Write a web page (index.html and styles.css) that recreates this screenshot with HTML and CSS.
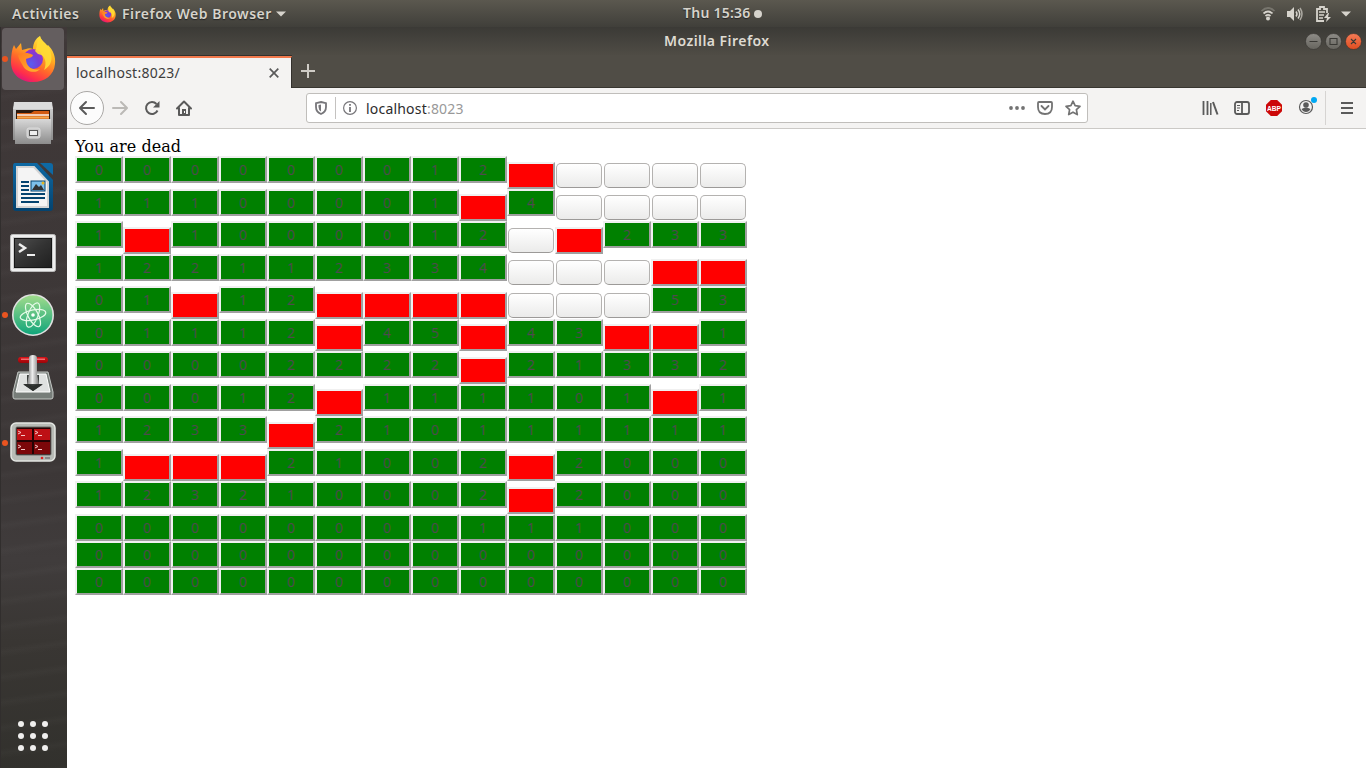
FILE: index.html
```html
<!DOCTYPE html>
<html lang="en">
<head>
<meta charset="utf-8">
<title>Mozilla Firefox</title>
<link rel="stylesheet" href="styles.css">
</head>
<body>
<svg class="defs" width="0" height="0" aria-hidden="true">
  <defs>
    <linearGradient id="fxBody" x1=".8" y1="0" x2=".3" y2="1"><stop offset="0" stop-color="#fff14a"/><stop offset=".35" stop-color="#ffb320"/><stop offset=".62" stop-color="#ff6a2a"/><stop offset=".85" stop-color="#ff2f4a"/><stop offset="1" stop-color="#e0147c"/></linearGradient>
    <radialGradient id="fxGlobe" cx=".4" cy=".75" r=".8"><stop offset="0" stop-color="#5a5df0"/><stop offset=".5" stop-color="#7440d8"/><stop offset="1" stop-color="#a030c8"/></radialGradient>
    <linearGradient id="fxFox" x1="0" y1="0" x2="1" y2="1"><stop offset="0" stop-color="#ff7a22"/><stop offset="1" stop-color="#ffb52c"/></linearGradient>
    <linearGradient id="metal" x1="0" y1="0" x2="0" y2="1"><stop offset="0" stop-color="#d8d8d8"/><stop offset="1" stop-color="#8c8c8c"/></linearGradient>
    <linearGradient id="atom" x1="0" y1="0" x2="0" y2="1"><stop offset="0" stop-color="#a2dc8c"/><stop offset="1" stop-color="#0ea47a"/></linearGradient>
    <linearGradient id="doc" x1="0" y1="0" x2="0" y2="1"><stop offset="0" stop-color="#0e69a4"/><stop offset="1" stop-color="#04436f"/></linearGradient>
    <linearGradient id="scr" x1="0" y1="0" x2="1" y2="1"><stop offset="0" stop-color="#505050"/><stop offset=".5" stop-color="#333"/><stop offset="1" stop-color="#1e1e1e"/></linearGradient>
    <linearGradient id="redTop" x1="0" y1="0" x2="0" y2="1"><stop offset="0" stop-color="#d81418"/><stop offset="1" stop-color="#9c0408"/></linearGradient>
    <linearGradient id="arm" x1="0" y1="0" x2="1" y2="0"><stop offset="0" stop-color="#777"/><stop offset=".45" stop-color="#eee"/><stop offset="1" stop-color="#777"/></linearGradient>
    <linearGradient id="knob" x1="0" y1="0" x2="0" y2="1"><stop offset="0" stop-color="#8e8c87"/><stop offset="1" stop-color="#66645e"/></linearGradient>
    <linearGradient id="knobClose" x1="0" y1="0" x2="0" y2="1"><stop offset="0" stop-color="#f47b56"/><stop offset="1" stop-color="#e04d20"/></linearGradient>
    <symbol id="firefox" viewBox="0 0 46 48">
      <path fill="url(#fxBody)" d="M4 10 6 14l5-6 1 7 4-1c2-1 5-1 7 0 0-6 3-11 7-13 1 5 5 6 7 10l1-1c5 5 8 12 7 19-1 11-10 18-22 18C10 47 1 39 1 27 1 20 2 14 4 10z"/>
      <circle cx="23" cy="24" r="10" fill="url(#fxGlobe)"/>
      <path fill="url(#fxFox)" d="M8 20c4-2 9-3 15 0 0 2-4 3-7 4 0 8 7 12 14 10-4 5-14 3-17-3-2-4-4-6-5-11z"/>
      <path fill="#ffdc35" d="M25 16c3-5 1-9 5-15 1 6 10 8 11 18 2 8-2 13-7 16 3-6 2-15-6-16z" opacity=".9"/>
    </symbol>
  </defs>
</svg>

<header class="topbar">
  <div class="topbar-left">
    <span class="activities">Activities</span>
    <svg class="mini-fox" width="17" height="18"><use href="#firefox"/></svg>
    <span class="appname">Firefox Web Browser</span>
    <svg width="10" height="6" viewBox="0 0 10 6"><path fill="#d6d3cc" d="M0 .5h10L5 5.5z"/></svg>
  </div>
  <div class="clock"><span class="clock-text">Thu 15:36</span><i class="dot"></i></div>
  <div class="tray">
    <svg width="14" height="14" viewBox="0 0 14 14" fill="none" stroke="#d6d3cc" stroke-width="1.7"><path d="M.5 4Q7-2 13.500 4" stroke="#77756d"/><path d="M2.500 6.500Q7 2.500 11.500 6.500M4.500 9Q7 6.800 9.500 9"/><circle cx="7" cy="11.500" r="2" fill="#d6d3cc" stroke="none"/></svg>
    <svg width="16" height="14" viewBox="0 0 16 14" fill="none" stroke="#d6d3cc" stroke-width="1.500"><path d="M0 4h3l4-4v14l-4-4H0z" fill="#d6d3cc" stroke="none"/><path d="M9 4.500q2 2.500 0 5M11 2.500q3.500 4.500 0 9"/><path d="M13 1q4 6 0 12" stroke="#aaa79f"/></svg>
    <svg class="battery" width="15" height="16" viewBox="0 0 15 16" fill="none" stroke="#d6d3cc" stroke-width="1.800"><path d="M8 15H1V3h3V1h4v2h3v4"/><path d="M3 6h6M3 9h5M3 12h4" stroke-width="1.500"/><path d="M12 7 8 12h3l-1 4 5-5h-3l1-4z" fill="#d6d3cc" stroke="none"/></svg>
    <svg width="10" height="6" viewBox="0 0 10 6"><path fill="#d6d3cc" d="M0 .5h10L5 5.500z"/></svg>
  </div>
</header>

<div class="desktop">
  <aside class="dock">
    <div class="slot active running"><svg width="46" height="48"><use href="#firefox"/></svg></div>
    <div class="slot">
      <svg width="42" height="44" viewBox="0 0 42 44"><path d="M2 1h38l1 8v30H1V9z" fill="url(#metal)"/><path d="M1 8 3 1h36l2 7z" fill="#dcdcdc"/><path d="M4 9h34v9H4z" fill="#2c1a10"/><path d="M5 12h14l3-2h15v8H5z" fill="#d35a12"/><path d="M5 14h32" stroke="#fff" stroke-width="1.400"/><path d="M5 16.500h32" stroke="#f5a84e" stroke-width="2"/><path d="M3 18h36v25H3z" fill="url(#metal)"/><rect x="15" y="27" width="13" height="10" rx="2" fill="#c8c8c8" stroke="#ddd"/><rect x="17.500" y="29.500" width="8" height="5" fill="#eee" stroke="#555"/></svg>
    </div>
    <div class="slot">
      <svg width="42" height="48" viewBox="0 0 42 48"><path d="M3 0h22l16 17v28q0 3-3 3H4q-3 0-3-3V3q0-3 2-3z" fill="url(#doc)"/><path d="M28 0h10q3 0 3 3v9z" fill="#0e69a4"/><path d="M5 4h17l14 15v25H5z" fill="#f4f4f4" stroke="#d4d4d4" stroke-width="2"/><path d="M9 19h8M9 23h8M9 27h8M9 31h24M9 35h24M9 39h18" stroke="#04436f" stroke-width="2"/><rect x="19" y="18" width="14" height="10" fill="#7dc0ea" stroke="#04436f"/><path d="m20 27 4-6 3 3 2-2 3 5z" fill="#333"/><circle cx="31" cy="20" r="1.500" fill="#e8b620"/></svg>
    </div>
    <div class="slot terminal">
      <svg width="46" height="38" viewBox="0 0 46 38"><rect x=".5" y=".5" width="45" height="37" rx="2" fill="#eee" stroke="#bbb"/><rect x="3.500" y="3.500" width="39" height="31" fill="url(#scr)" stroke="#ccc"/><rect x="4.500" y="4.500" width="37" height="29" fill="none" stroke="#161616"/><path d="m9 10 6 4-6 4" fill="none" stroke="#eee" stroke-width="2.500"/><path d="M17 21h8" stroke="#eee" stroke-width="2"/></svg>
    </div>
    <div class="slot running">
      <svg width="42" height="42" viewBox="0 0 42 42"><circle cx="21" cy="21" r="20.200" fill="url(#atom)" stroke="#e0e0e0" stroke-width="1.600"/><g fill="none" stroke="#e6fbe9" stroke-width="1.200"><ellipse cx="21" cy="21" rx="5" ry="13" transform="rotate(-28 21 21)"/><ellipse cx="21" cy="21" rx="5" ry="13" transform="rotate(22 21 21)"/><ellipse cx="21" cy="21" rx="5" ry="13" transform="rotate(78 21 21)"/></g><circle cx="21" cy="21" r="1.800" fill="#fff"/></svg>
    </div>
    <div class="slot press">
      <svg width="42" height="45" viewBox="0 0 42 45"><path d="M6 17h30l5 20v5q0 2-2 2H3q-2 0-2-2v-5z" fill="#777d79" stroke="#c4c8c5"/><path d="M8 19h26l4 18H4z" fill="#dfe1e0" stroke="#fff"/><rect x="6" y="2" width="30" height="6" rx="3" fill="url(#redTop)"/><rect x="9" y="3.500" width="24" height="1.500" fill="#f36b6e"/><path d="M15 20h12v10h3l-9 6-9-6h3z" fill="#3b3f3d"/><path d="M17 3q0-3 4-3t4 3v16l2 10H15l2-10z" fill="url(#arm)"/><path d="M11 29h5l5 2 5-2h5l-10 7z" fill="#2c2f2d"/></svg>
    </div>
    <div class="slot running">
      <svg width="46" height="41" viewBox="0 0 46 41"><rect x="1" y="1" width="44" height="38" rx="5" fill="#b8bbb6" stroke="#e4e6e2" stroke-width="1.500"/><rect x="6" y="5" width="35" height="28" rx="1" fill="#240304" stroke="#6a6c68"/><path d="M7 7h15v11H7zM24 7h16v11H24z" fill="#bd1015"/><path d="M7 20h15v12H7zM24 20h16v12H24z" fill="#7b0709"/><g fill="none" stroke="#f6c6c6" stroke-width="1"><path d="m8 9 3 1.500L8 12M11 13.500h4M25 9l3 1.500-3 1.500M28 13.500h4M8 23l3 1.500L8 26M11 27.500h4M25 23l3 1.500-3 1.500M28 27.500h4"/></g><circle cx="32" cy="36" r="1.300" fill="#e02020"/><path d="M35 36h5" stroke="#888" stroke-width="2"/></svg>
    </div>
    <div class="apps"><i></i><i></i><i></i><i></i><i></i><i></i><i></i><i></i><i></i></div>
  </aside>

  <main class="window">
    <div class="titlebar">
      <span class="title">Mozilla Firefox</span>
      <svg class="controls" width="57" height="17" viewBox="0 0 57 17"><g stroke="#32312d" stroke-width=".6"><circle cx="8.500" cy="8.500" r="8" fill="url(#knob)"/><circle cx="28.500" cy="8.500" r="8" fill="url(#knob)"/><circle cx="48.500" cy="8.500" r="8" fill="url(#knobClose)"/></g><path d="M4.500 8.500h8M25 5.500h7v6h-7zM46 6l5 5m0-5-5 5" fill="none" stroke="#3a3935" stroke-width="1.100"/></svg>
    </div>
    <div class="tabs">
      <div class="tab"><span class="tab-title">localhost:8023/</span><svg width="10" height="10" viewBox="0 0 10 10"><path d="m.7.7 8.600 8.600m0-8.600L.7 9.300" stroke="#5a5a5a" stroke-width="1.700"/></svg></div>
      <svg class="plus" width="14" height="14" viewBox="0 0 14 14"><path d="M7 0v14M0 7h14" stroke="#cfccc6" stroke-width="2"/></svg>
    </div>
    <nav class="toolbar">
      <div class="back"><svg width="16" height="14" viewBox="0 0 16 14" fill="none" stroke="#5a5a5a" stroke-width="2" stroke-linecap="round" stroke-linejoin="round"><path d="M15 7H1.500M7 1 1 7l6 6"/></svg></div>
      <svg class="fwd" width="16" height="14" viewBox="0 0 16 14" fill="none" stroke="#bbb9b6" stroke-width="2" stroke-linecap="round" stroke-linejoin="round"><path d="M1 7h13.500M9 1l6 6-6 6"/></svg>
      <svg class="reload" width="16" height="16" viewBox="0 0 16 16"><path d="M13.500 10.500A6 6 0 1 1 12.500 4" fill="none" stroke="#5a5a5a" stroke-width="2"/><path d="M15.500 1v6.500H9z" fill="#5a5a5a"/></svg>
      <svg class="home" width="16" height="16" viewBox="0 0 16 16"><path d="M1 8.500 8 1.500l7 7M3 8v7h10V8" fill="none" stroke="#5a5a5a" stroke-width="2" stroke-linecap="round" stroke-linejoin="round"/><path d="M6 9h4v6H6z" fill="#5a5a5a"/><path d="M8 11h1v2H8z" fill="#fff"/></svg>
      <div class="urlbar">
        <svg width="12" height="14" viewBox="0 0 12 14"><path d="M6 1 11 2.200V6q0 5-5 7-5-2-5-7V2.200z" fill="none" stroke="#77767a" stroke-width="1.800"/><path d="M6 3.500v7Q3.500 9 3.500 6V4z" fill="#77767a"/></svg>
        <i class="sep"></i>
        <svg width="14" height="14" viewBox="0 0 14 14"><circle cx="7" cy="7" r="6.400" fill="none" stroke="#77767a" stroke-width="1.200"/><path d="M7 6v5M7 3v1.800" stroke="#77767a" stroke-width="1.800"/></svg>
        <span class="address">localhost<span>:8023</span></span>
        <svg class="more" width="16" height="4" viewBox="0 0 16 4" fill="#737373"><circle cx="2" cy="2" r="1.900"/><circle cx="8" cy="2" r="1.900"/><circle cx="14" cy="2" r="1.900"/></svg>
        <svg class="pocket" width="16" height="14" viewBox="0 0 16 14" fill="none" stroke="#737373" stroke-width="1.800"><path d="M2 1h12q1 0 1 1v4q0 7-7 7T1 6V2q0-1 1-1z"/><path d="m4.500 5 3.500 3.500L11.500 5" stroke-linecap="round"/></svg>
        <svg class="star" width="16" height="16" viewBox="0 0 16 16"><path d="m8 1.200 2.100 4.500 4.900.6-3.600 3.300.9 5L8 12.200l-4.300 2.400.9-5L1 6.300l4.900-.6z" fill="none" stroke="#737373" stroke-width="1.700" stroke-linejoin="round"/></svg>
      </div>
      <div class="tools">
        <svg width="16" height="14" viewBox="0 0 16 14" stroke="#5a5a5a" stroke-width="2"><path d="M1.500 0v14M5.500 0v14" stroke-width="1.800"/><path d="M8.800 2v12" stroke-width="1.500"/><path d="m11 1 4.500 12.500"/></svg>
        <svg width="16" height="14" viewBox="0 0 16 14" fill="none" stroke="#5a5a5a" stroke-width="1.800"><rect x="1" y="1" width="14" height="12" rx="2"/><path d="M8 1v12"/><path d="M3 4.500h3M3 7h3M3 9.500h2" stroke-width="1.100"/></svg>
        <svg width="16" height="16" viewBox="0 0 16 16"><path d="M4.800 0h6.400L16 4.800v6.400L11.200 16H4.800L0 11.200V4.800z" fill="#cc0808"/><text x="8" y="11" text-anchor="middle" class="abp" textLength="14" lengthAdjust="spacingAndGlyphs">ABP</text></svg>
        <svg class="account" width="19" height="19" viewBox="0 0 19 19"><circle cx="8" cy="11" r="6.500" fill="none" stroke="#5a5a5a" stroke-width="1.200"/><circle cx="8" cy="9" r="2.800" fill="#5a5a5a"/><path d="M3.500 13q4.500-3 9 0-1.500 3-4.500 3t-4.500-3z" fill="#5a5a5a"/><circle cx="16" cy="4" r="3" fill="#00a8f3"/></svg>
        <i class="divider"></i>
        <svg width="12" height="12" viewBox="0 0 12 12"><path d="M0 1h12M0 6h12M0 11h12" stroke="#5a5a5a" stroke-width="2"/></svg>
      </div>
    </nav>
    <section class="page">
      <div class="message">You are dead</div>
      <div class="board" id="board"></div>
    </section>
  </main>
</div>
<script src="board.js"></script>
</body>
</html>
```

FILE: styles.css
```css
* { box-sizing: border-box; }
body { margin: 0; width: 1366px; height: 768px; overflow: hidden; display: flex; flex-direction: column; font-family: "Noto Sans", "Open Sans", sans-serif; font-size: 14px; background: #3c3736; }
svg { display: block; flex: none; overflow: visible; }
.defs { position: absolute; }

.topbar { height: 27px; flex: none; display: grid; grid-template-columns: 1fr auto 1fr; align-items: center; background: linear-gradient(#5b584f, #403f3a); color: #d6d3cb; font-weight: 600; text-shadow: 0 1px 1px #222; }
.topbar-left { display: flex; align-items: center; padding-left: 12px; }
.activities { width: 87px; letter-spacing: .5px; }
.mini-fox { margin-right: 6px; }
.appname { width: 154px; white-space: nowrap; letter-spacing: .5px; }
.clock { display: flex; align-items: center; gap: 4px; padding-left: 79px; width: 158px; }
.clock-text { width: 67px; white-space: nowrap; letter-spacing: .25px; margin-top: -2px; }
.dot { width: 8px; height: 8px; border-radius: 50%; background: #d6d3cc; flex: none; }
.tray { display: flex; align-items: center; justify-content: flex-end; gap: 13px; padding-right: 15px; }
.tray svg:first-child { margin-right: -1px; }
.battery { margin-right: -3px; }

.desktop { flex: 1; display: flex; min-height: 0; }
.dock { width: 67px; flex: none; display: flex; flex-direction: column; align-items: center; gap: 2px; padding: 1px 3px 0 0; border-left: 1px solid #312e2d; background: repeating-linear-gradient(172deg, transparent 0 14px, rgba(255,255,255,.018) 19px, transparent 25px), linear-gradient(#3f3838, #3c3737 60%, #403c3c 72%, #393633 83%, #32312d); }
.slot { width: 62px; height: 62px; border-radius: 4px; display: flex; align-items: center; justify-content: center; position: relative; }
.active { background: #645e5f; }
.running::before { content: ""; position: absolute; left: 0; top: 28px; width: 6px; height: 6px; border-radius: 50%; background: #e95420; }
.terminal { padding-top: 4px; }
.press { padding-bottom: 3px; }
.slot:nth-child(7) { padding-bottom: 2px; }
.apps { margin-top: auto; margin-bottom: 17px; display: grid; grid-template-columns: repeat(3, 6px); gap: 6px; }
.apps i { width: 6px; height: 6px; border-radius: 50%; background: #f0efee; }

.window { flex: 1; display: flex; flex-direction: column; min-width: 0; background: #fff; }
.titlebar { height: 28px; flex: none; background: linear-gradient(#3b3a36, #4f4c45); display: grid; grid-template-columns: 1fr auto 1fr; align-items: center; color: #dfdbd2; font-weight: 600; }
.title { grid-column: 2; width: 105px; white-space: nowrap; letter-spacing: .45px; margin-top: -2px; }
.controls { justify-self: end; margin-right: 4px; }
.tabs { height: 33px; flex: none; display: flex; align-items: center; background: #504d46; box-shadow: inset 0 -1px #383630; }
.tab { width: 225px; height: 33px; display: flex; align-items: center; justify-content: space-between; padding: 0 12px 0 9px; border-top: 2px solid #f2794c; border-right: 1px solid #33312d; background: #f4f3f2; color: #3d3d3d; box-shadow: 0 -1px #33312d; }
.tab { margin-top: 1px; height: 32px; }
.tab-title { letter-spacing: .25px; margin-top: -2px; }
.plus { margin-left: 9px; margin-top: -2px; }

.toolbar { height: 41px; flex: none; display: flex; align-items: center; padding-left: 3px; background: #f4f3f2; border-bottom: 1px solid #cbc9c6; }
.back { width: 34px; height: 34px; border: 1px solid #aaa8a6; border-radius: 50%; background: #fcfcfc; display: flex; align-items: center; justify-content: center; }
.fwd { margin-left: 8px; }
.reload { margin-left: 16px; }
.home { margin-left: 16px; }
.urlbar { width: 782px; height: 30px; margin-left: 114px; padding: 0 6px 0 8px; display: flex; align-items: center; background: #fff; border: 1px solid #c0bebb; border-radius: 3px; }
.sep { width: 1px; height: 22px; margin: 0 7px 0 8px; background: #c4c2c0; }
.address { margin-left: 9px; color: #2c2c2c; letter-spacing: .2px; }
.address span { color: #999; }
.more { margin-left: auto; }
.pocket { margin-left: 12px; }
.star { margin-left: 12px; }
.tools { margin-left: auto; padding-right: 13px; display: flex; align-items: center; gap: 16px; }
.abp { font: bold 8px "Liberation Sans", sans-serif; fill: #fff; }
.account { margin: -5px -8px 0 0; }
.divider { width: 1px; height: 34px; background: #d6d4d2; margin-right: -1px; }

.page { flex: 1; padding: 8px; }
.message { height: 19px; line-height: 19px; font-family: "DejaVu Serif", serif; font-size: 16px; letter-spacing: .06px; color: #000; white-space: nowrap; }
.row { display: flex; height: 33px; align-items: flex-start; }
.row:nth-child(even) { height: 32px; }
.row:nth-child(n+12) { height: 27px; }
.cell { width: 48px; height: 27px; flex: none; border: 2px solid; border-color: #f0f0f0 #a0a0a0 #a0a0a0 #f0f0f0; background: #008000; color: #4c4c4c; font: 14px/23px "Noto Sans", sans-serif; text-align: center; }
.mine, .hidden { margin-top: 6px; }
.row:nth-child(even) .mine, .row:nth-child(even) .hidden { margin-top: 5px; }
.mine { background: #f00; }
.hidden { width: 46px; height: 25px; margin-left: 1px; margin-right: 1px; border: 1px solid #b4b2b0; border-bottom-color: #9c9a98; border-radius: 5px; background: linear-gradient(#fff, #ebebea); transform: translateY(1px); }
```

FILE: board.js
```js
// "*" is an exploded mine, "." is a cell that is still covered.
const rows = [
  "000000012*....",
  "11100001*4....",
  "1*1000012.*233",
  "122112334...**",
  "01*12****...53",
  "01112*45*43**1",
  "00002222*21332",
  "00012*111101*1",
  "1233*210111111",
  "1***21002*2000",
  "123210002*2000",
  "00000000111000",
  "00000000000000",
  "00000000000000"
];
const board = document.getElementById("board");
for (const line of rows) {
  const row = document.createElement("div");
  row.className = "row";
  for (const value of line) {
    const cell = document.createElement("div");
    cell.className = value === "*" ? "cell mine" : value === "." ? "cell hidden" : "cell";
    if (value !== "*" && value !== ".") cell.textContent = value;
    row.append(cell);
  }
  board.append(row);
}
```
